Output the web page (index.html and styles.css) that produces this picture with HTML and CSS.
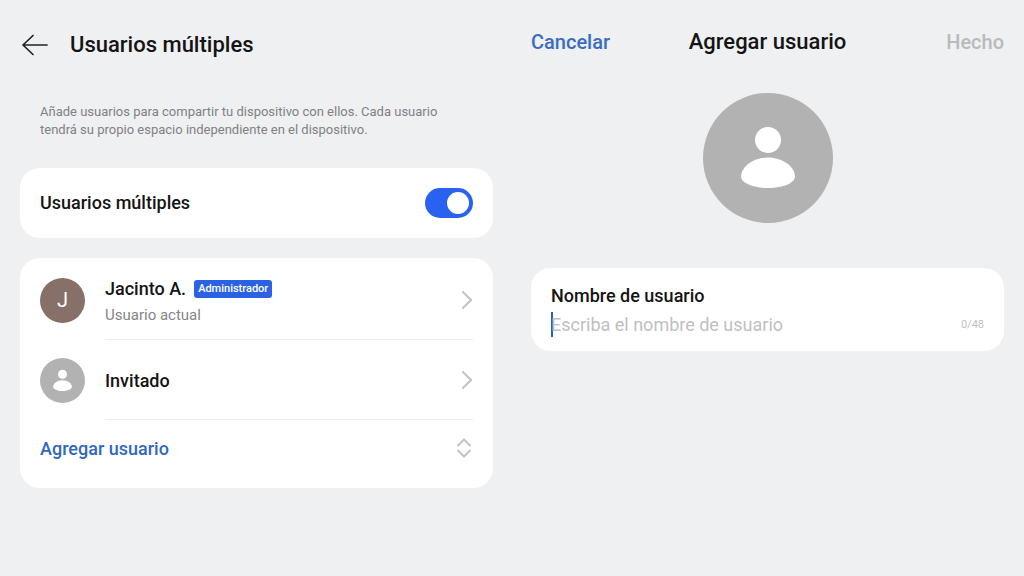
FILE: index.html
```html
<!DOCTYPE html>
<html lang="es">
<head>
    <meta charset="UTF-8">
    <meta name="viewport" content="width=device-width, initial-scale=1.0">
    <title>Usuarios múltiples</title>
    <link rel="stylesheet" href="styles.css">
</head>
<body>
    <div class="screens">
        <!-- Lista de usuarios -->
        <main class="screen">
            <header class="list-header">
                <button type="button" class="back" aria-label="Volver">
                    <svg width="26" height="22" viewBox="0 0 26 22" fill="none" stroke="currentColor" stroke-width="1.700" stroke-linecap="round" stroke-linejoin="round">
                        <path d="M25 11H1M11 1.500L1 11l10 9.500"/>
                    </svg>
                </button>
                <h1>Usuarios múltiples</h1>
            </header>

            <p class="note">Añade usuarios para compartir tu dispositivo con ellos. Cada usuario tendrá su propio espacio independiente en el dispositivo.</p>

            <div class="card toggle-card">
                <label for="multi" class="item-name">Usuarios múltiples</label>
                <input type="checkbox" role="switch" id="multi" class="switch" checked>
            </div>

            <div class="card user-list">
                <a href="#jacinto" class="user">
                    <span class="avatar avatar-letter">J</span>
                    <span class="user-body">
                        <span class="user-text">
                            <span class="user-title">
                                <span class="item-name">Jacinto A.</span>
                                <span class="badge">Administrador</span>
                            </span>
                            <span class="user-status">Usuario actual</span>
                        </span>
                        <svg class="chevron" width="11" height="18" viewBox="0 0 11 18">
                            <path d="M1 1l8 8-8 8"/>
                        </svg>
                    </span>
                </a>
                <a href="#invitado" class="user">
                    <svg class="avatar" viewBox="0 0 130 130">
                        <circle class="avatar-bg" cx="65" cy="65" r="65"/>
                        <circle class="avatar-figure" cx="65" cy="47" r="13"/>
                        <path class="avatar-figure" d="M65 64.500C80 64.500 92 74 92 83.500C92 90 80 95 65 95S38 90 38 83.500C38 74 50 64.500 65 64.500z"/>
                    </svg>
                    <span class="user-body">
                        <span class="user-text">
                            <span class="item-name">Invitado</span>
                        </span>
                        <svg class="chevron" width="11" height="18" viewBox="0 0 11 18">
                            <path d="M1 1l8 8-8 8"/>
                        </svg>
                    </span>
                </a>
                <button type="button" class="add-user">
                    Agregar usuario
                    <svg class="chevron" width="17" height="20" viewBox="0 0 17 20">
                        <path d="M2 7.500l6-6 6 6M2 12.500l6 6 6-6"/>
                    </svg>
                </button>
            </div>
        </main>

        <!-- Formulario de nuevo usuario -->
        <form class="screen">
            <header class="form-header">
                <button type="button" class="cancel">Cancelar</button>
                <h1>Agregar usuario</h1>
                <button type="submit" class="done" disabled>Hecho</button>
            </header>

            <svg class="photo" viewBox="0 0 130 130">
                <circle class="avatar-bg" cx="65" cy="65" r="65"/>
                <circle class="avatar-figure" cx="65" cy="47" r="13"/>
                <path class="avatar-figure" d="M65 64.500C80 64.500 92 74 92 83.500C92 90 80 95 65 95S38 90 38 83.500C38 74 50 64.500 65 64.500z"/>
            </svg>

            <div class="card name-card">
                <label for="username" class="item-name">Nombre de usuario</label>
                <div class="name-field">
                    <input type="text" id="username" maxlength="48" placeholder="Escriba el nombre de usuario">
                    <span class="counter">0/48</span>
                </div>
            </div>
        </form>
    </div>
</body>
</html>
```
FILE: styles.css
```css
* {
    margin: 0;
    padding: 0;
    box-sizing: border-box;
}

body {
    font-family: Roboto, sans-serif;
    background-color: #eff0f2;
    color: #141414;
    min-height: 100vh;
}

button,
input {
    font-family: inherit;
    background: none;
    border: none;
}

h1 {
    font-size: 22px;
    line-height: 28px;
    font-weight: 500;
}

.screens {
    display: grid;
    grid-template-columns: 1fr 1fr;
    gap: 38px;
    padding: 0 20px;
}

.screen {
    display: flex;
    flex-direction: column;
}

.card {
    background-color: #fff;
    border-radius: 20px;
    padding: 0 20px;
}

.item-name {
    font-size: 18px;
    line-height: 24px;
    font-weight: 500;
}

/* Lista de usuarios */
.list-header {
    display: flex;
    align-items: center;
    gap: 22px;
    padding: 31px 2px 0;
}

.back {
    display: flex;
    color: #222;
}

.note {
    margin: 44px 20px 29px;
    font-size: 13px;
    line-height: 18px;
    color: #808183;
}

.toggle-card {
    display: flex;
    align-items: center;
    justify-content: space-between;
    min-height: 70px;
    margin-bottom: 20px;
}

.switch {
    appearance: none;
    display: flex;
    align-items: center;
    width: 48px;
    height: 30px;
    padding: 0 4px;
    border-radius: 15px;
    background-color: #b2b2b2;
}

.switch::before {
    content: "";
    width: 22px;
    height: 22px;
    border-radius: 50%;
    background-color: #fff;
}

.switch:checked {
    justify-content: flex-end;
    background-color: #2962f0;
}

.user-list {
    padding: 2px 20px 12px;
}

.user {
    display: flex;
    align-items: center;
    gap: 20px;
    color: inherit;
    text-decoration: none;
}

.avatar {
    flex: none;
    width: 45px;
    height: 45px;
}

.avatar-letter {
    display: flex;
    align-items: center;
    justify-content: center;
    border-radius: 50%;
    background-color: #87706a;
    color: #fff;
    font-size: 20px;
}

.avatar-bg {
    fill: #b2b2b2;
}

.avatar-figure {
    fill: #fff;
}

.user-body {
    flex: 1;
    display: flex;
    align-items: center;
    justify-content: space-between;
    min-height: 80px;
    border-bottom: 1px solid #efefef;
}

.user-text {
    display: flex;
    flex-direction: column;
    gap: 4px;
    padding-top: 2px;
}

.user-title {
    display: flex;
    align-items: center;
    gap: 8px;
}

.badge {
    padding: 0 4px;
    border-radius: 3px;
    background-color: #2b62e3;
    color: #fff;
    font-size: 11px;
    line-height: 18px;
    font-weight: 500;
}

.user-status {
    font-size: 15px;
    line-height: 20px;
    color: #858585;
}

.chevron {
    fill: none;
    stroke: #c2c2c2;
    stroke-width: 2;
    stroke-linecap: round;
    stroke-linejoin: round;
}

.add-user {
    display: flex;
    align-items: center;
    justify-content: space-between;
    width: 100%;
    min-height: 56px;
    color: #2f68bd;
    font-size: 18px;
    font-weight: 500;
}

/* Nuevo usuario */
.form-header {
    display: grid;
    grid-template-columns: 1fr auto 1fr;
    align-items: center;
    padding-top: 28px;
}

.cancel,
.done {
    font-size: 20px;
    line-height: 28px;
    font-weight: 500;
}

.cancel {
    justify-self: start;
    color: #3a6cc6;
}

.done {
    justify-self: end;
    color: #b9babc;
}

.photo {
    align-self: center;
    width: 130px;
    height: 130px;
    margin: 37px 0 45px;
}

.name-card {
    padding: 16px 20px 14px;
}

.name-field {
    display: flex;
    align-items: center;
    gap: 12px;
    margin-top: 4px;
}

.name-field input {
    flex: 1;
    min-width: 0;
    height: 25px;
    outline: none;
    font-size: 18px;
    color: inherit;
    /* cursor de texto */
    box-shadow: inset 2px 0 #2b5fc4;
}

.name-field input::placeholder {
    color: #bfbfbf;
}

.counter {
    font-size: 11px;
    color: #bfbfbf;
}
```
